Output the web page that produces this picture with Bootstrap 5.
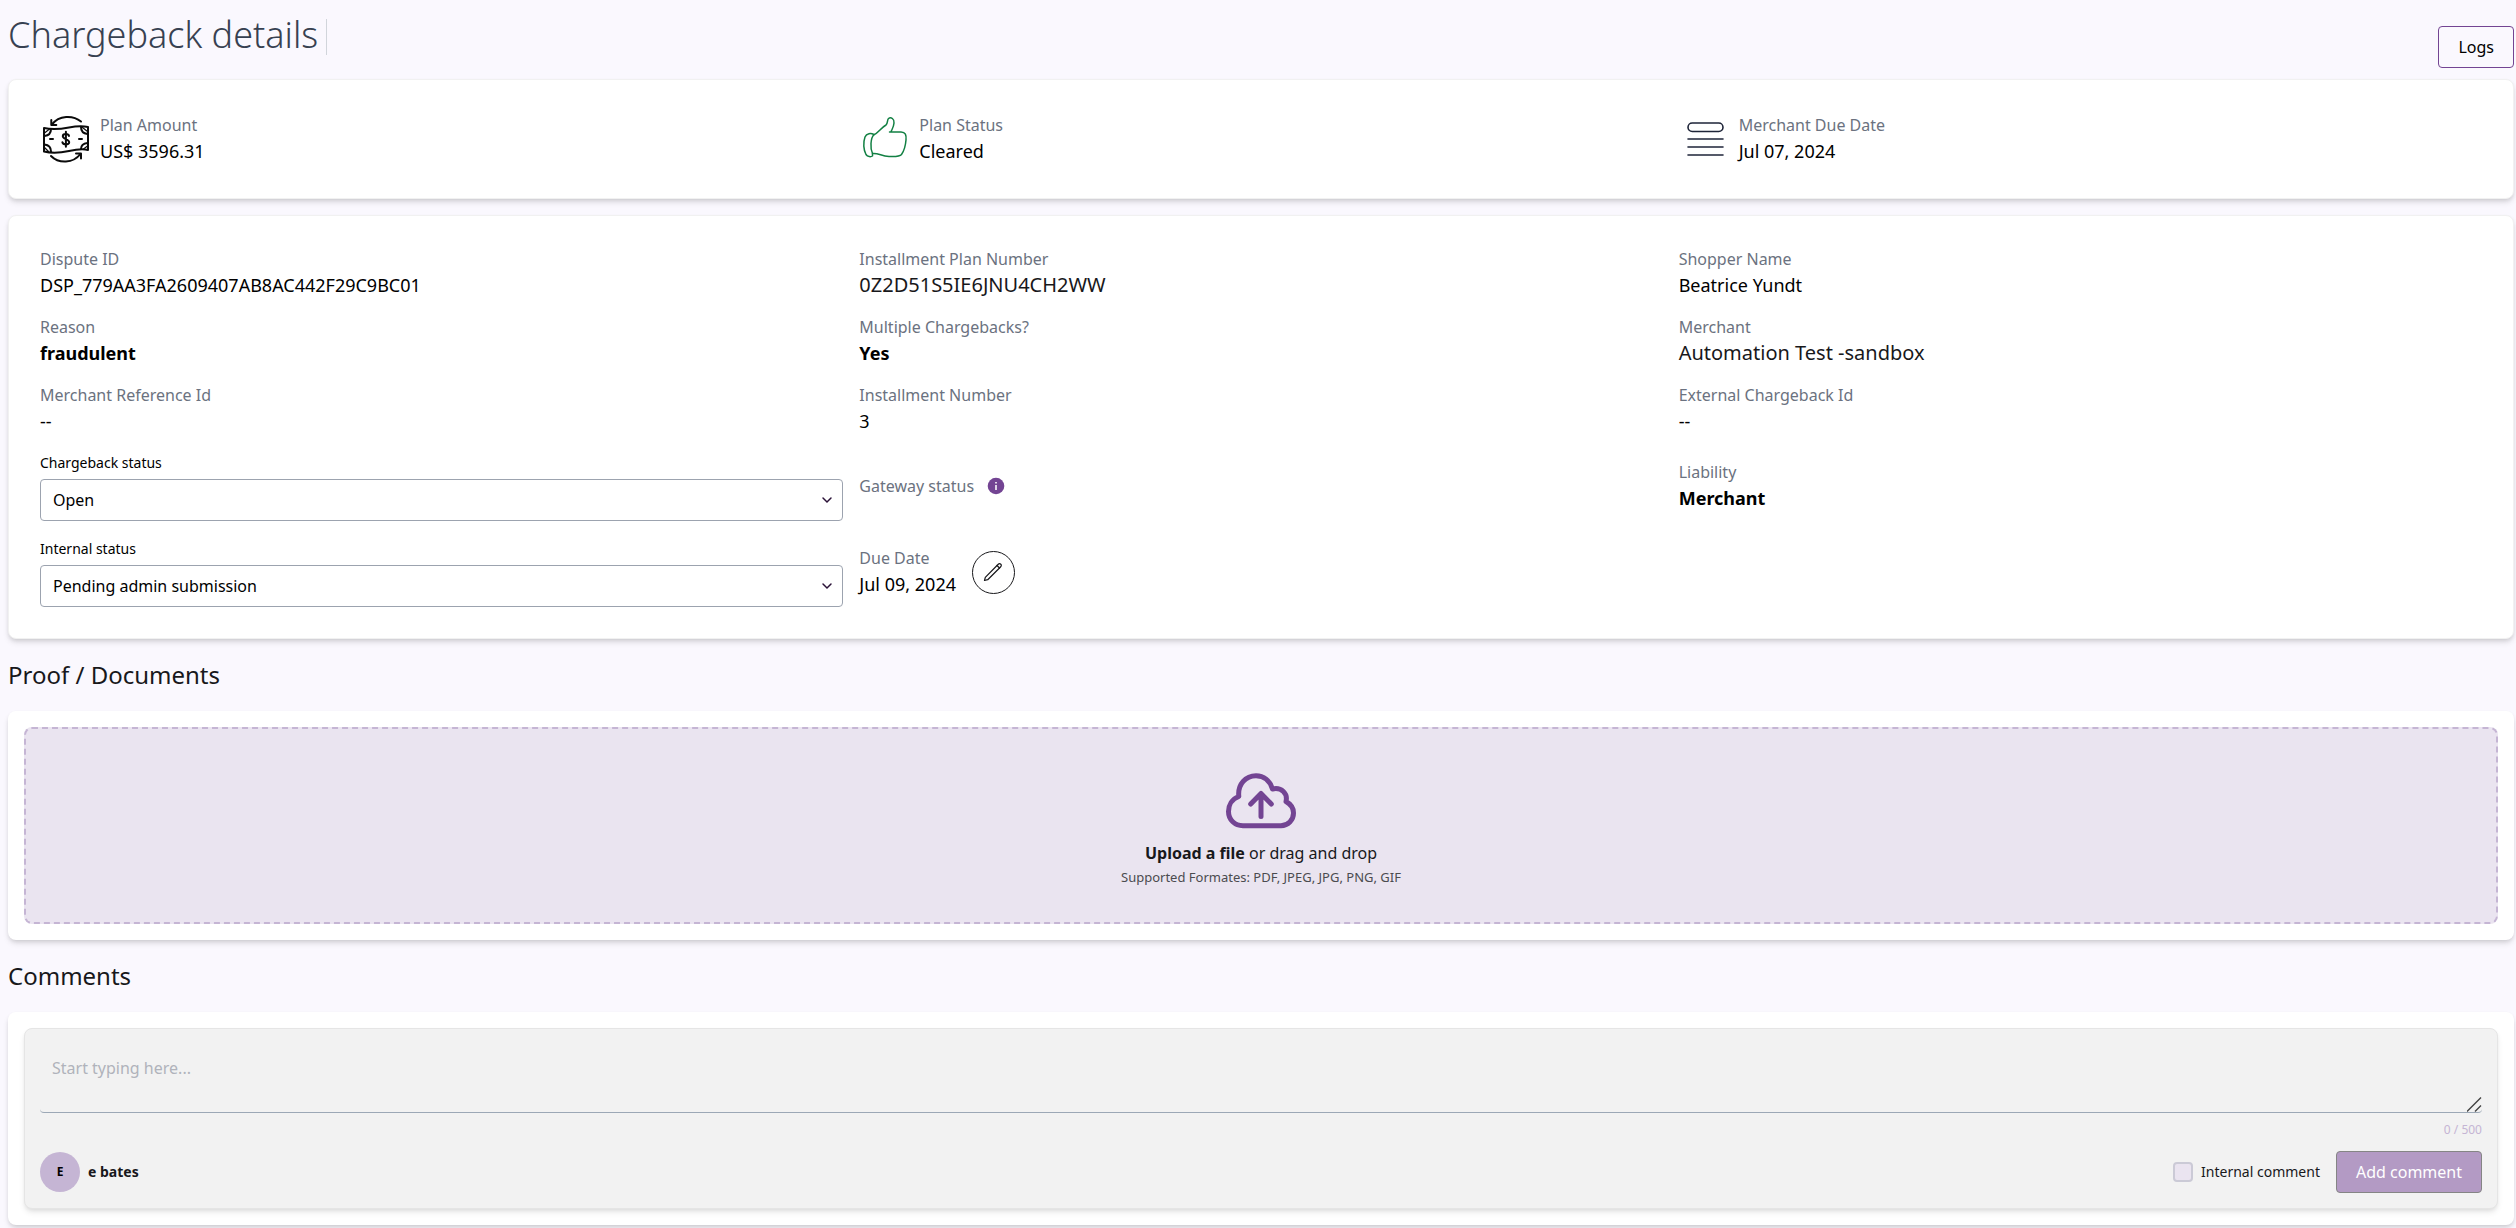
<!DOCTYPE html>
<html lang="en">
<head>
<meta charset="utf-8">
<meta name="viewport" content="width=device-width, initial-scale=1">
<title>Chargeback details</title>
<link href="https://cdn.jsdelivr.net/npm/bootstrap@5.3.0/dist/css/bootstrap.min.css" rel="stylesheet">
<style>
  :root { --purple: #734493; --purple-soft: #c5b5d4; --purple-pale: #eae4f0; --muted-ink: #6b7280; }
  body { background: #faf8fe; color: #18181b; font-family: "Noto Sans", sans-serif; font-size: 16px; line-height: 24px; }
  .page { padding: 0 2px 3px 8px; }
  .page-head { padding: 15px 0 11px; }
  .page-title { font-size: 36px; line-height: 40px; font-weight: 300; color: #374151; }
  .title-rule { width: 1px; height: 36px; background: #d1d5db; }
  .section-title { font-size: 24px; line-height: 32px; font-weight: 400; margin: 20px 0; }
  .panel { background: #fff; border-radius: 8px; box-shadow: 0 4px 6px -1px rgba(0,0,0,.12), 0 2px 4px -1px rgba(0,0,0,.1); }
  .panel-lined { border: 1px solid #f1f1f1; padding: 31px; }
  .btn-main { font-size: 16px; line-height: 24px; padding: 8px 19px; border-radius: 4px; }
  .btn-line { --bs-btn-color: #000; --bs-btn-border-color: var(--purple); --bs-btn-hover-bg: var(--purple-pale); --bs-btn-hover-border-color: var(--purple); margin-top: 11px; }
  .btn-fill, .btn-fill:disabled { background: #b39ac4; border-color: #858585; color: #fff; opacity: 1; }
  .summary-cell { min-height: 56px; }
  .summary-icon { width: 52px; height: 52px; flex: none; }
  .field-name { color: var(--muted-ink); font-weight: 400; margin: 0; }
  .field-value { color: #000; font-size: 18px; line-height: 28px; margin: 0; }
  .field-value.plain { color: #18181b; font-size: 20px; text-decoration: none; }
  .field-value.strong { font-weight: 700; }
  .status-label { font-size: 14px; line-height: 24px; color: #000; margin-bottom: 4px; }
  .status-select { height: 42px; padding: 8px 36px 8px 12px; border-color: #9ca3af; border-radius: 4px; color: #000; font-size: 16px; line-height: 24px;
    --bs-form-select-bg-img: url("data:image/svg+xml,%3Csvg xmlns='http://www.w3.org/2000/svg' viewBox='0 0 12 12'%3E%3Cpath d='M2 4l4 4 4-4' fill='none' stroke='%232b1238' stroke-width='1.5' stroke-linecap='round'/%3E%3C/svg%3E");
    background-size: 12px 12px; background-position: right 9px center; }
  .info-icon { margin-left: 11px; }
  .edit-btn { width: 43px; height: 43px; border: 1px solid #18181b; }
  .drop-zone { background: var(--purple-pale); border: 2px dashed var(--purple-soft); border-radius: 8px; padding: 44px 16px 32px; cursor: pointer; }
  .drop-hint { font-size: 13px; line-height: 25px; color: #4b4b4f; }
  .comment-box { background: #f2f2f2; border: 1px solid #e5e5e5; border-radius: 8px; padding: 15px; box-shadow: 0 4px 6px -1px rgba(0,0,0,.1), 0 2px 4px -1px rgba(0,0,0,.06); }
  .comment-input, .comment-input:focus { height: 69px; min-height: 69px; padding: 12px; background: transparent; border: 0 solid #9ca8b6; border-bottom-width: 1px; border-radius: 4px; font-size: 16px; line-height: 24px; }
  .comment-input::placeholder { color: #b0b3bb; }
  .comment-input::-webkit-resizer { background: url("data:image/svg+xml,%3Csvg xmlns='http://www.w3.org/2000/svg' viewBox='0 0 15 15'%3E%3Cpath d='M0 14.500L14 .5M8 14.500L14 8.500' fill='none' stroke='%23444' stroke-width='1.4'/%3E%3C/svg%3E") center / 100% 100% no-repeat; }
  .char-count { font-size: 12px; line-height: 18px; color: var(--purple-soft); margin: 8px 0 12px; }
  .avatar { width: 40px; height: 40px; background: var(--purple-soft); color: #000; font-size: 12px; font-weight: 700; }
  .small-text { font-size: 14px; }
  .internal-check.form-check-input { width: 20px; height: 20px; margin: 0; border: 2px solid #cbcad6; background-color: var(--purple-pale); border-radius: 4px; }
</style>
</head>
<body>
<main class="page">
  <header class="page-head d-flex justify-content-between align-items-start">
    <div class="d-flex align-items-end gap-2">
      <h1 class="page-title mb-0">Chargeback details</h1>
      <span class="title-rule"></span>
    </div>
    <button type="button" class="btn btn-main btn-line">Logs</button>
  </header>

  <section class="panel panel-lined mb-3">
    <div class="row g-3">
      <div class="col-4">
        <div class="summary-cell d-flex align-items-center gap-2">
          <svg class="summary-icon" viewBox="0 0 52 52" fill="none" stroke="#0b0b0b" stroke-width="2" stroke-linecap="round" stroke-linejoin="round" aria-hidden="true">
            <path d="M4 15C13 17 21 16 29 14.500S43 13 48 14V37C42 35.500 36 36.500 29 38S12 40.500 4 38.500Z"/>
            <path d="M11 16C11 20 8.500 22.500 4.500 23M41 14C41 18 43.500 20.500 47.500 21M4.500 31.500C8.500 32 11 34.500 11 38.500M47.500 30C43.500 30.500 41 32.500 41 36"/>
            <path d="M4.500 20L9.500 16M42.500 14.500L47.500 18.500M4.500 34.500L8.500 38.500M43.500 36L47.500 33" stroke-width="1.200"/>
            <path d="M10 26H13M39 26H42"/>
            <path d="M29 23C28.500 20.300 22.800 20.300 22.800 23.200S29.200 26.300 29.200 29.200S23 32 22.400 29.200M25.900 18.700V33.800"/>
            <path d="M41 8.500C33 2 19 2 12 11.500M11.300 7V12H16.300M11 43C19 51 33 50.500 40.500 41M36 40.500H41V45.500"/>
          </svg>
          <div><p class="field-name">Plan Amount</p><p class="field-value">US$ 3596.31</p></div>
        </div>
      </div>
      <div class="col-4">
        <div class="summary-cell d-flex align-items-center gap-2">
          <svg class="summary-icon" viewBox="0 0 52 52" fill="none" stroke="#128043" stroke-width="1.500" stroke-linecap="round" stroke-linejoin="round" aria-hidden="true">
            <path d="M14.500 22C20 19.500 21.500 15 27 12C29 10 28 7 29.500 5.500C32 3.500 35.500 6 35 10C34.500 15 33 16 32 18.800M30.500 19H42C46.500 19 47.500 22 47 27C46.500 33 45 38 42.500 41.500C40.500 44 36 43.500 30 43.500C22 43 20 40 13.500 40.500"/>
            <path d="M15 21.500C12 20 7.500 20 6 24C4 29.500 4.500 37 7 41.500C8.500 44 12 44 13.500 43V40.500M15 21.500C11.500 25 11 35.500 13.500 40.500"/>
          </svg>
          <div><p class="field-name">Plan Status</p><p class="field-value">Cleared</p></div>
        </div>
      </div>
      <div class="col-4">
        <div class="summary-cell d-flex align-items-center gap-2">
          <svg class="summary-icon" viewBox="0 0 52 52" fill="none" stroke="#1e2438" stroke-width="1.600" stroke-linecap="round" aria-hidden="true">
            <rect x="9" y="10" width="35" height="8.500" rx="4.250"/>
            <path d="M9 26H44M9 34H44M9 42H44"/>
          </svg>
          <div><p class="field-name">Merchant Due Date</p><p class="field-value">Jul 07, 2024</p></div>
        </div>
      </div>
    </div>
  </section>

  <section class="panel panel-lined">
    <div class="row g-3">
      <div class="col-4"><p class="field-name">Dispute ID</p><p class="field-value">DSP_779AA3FA2609407AB8AC442F29C9BC01</p></div>
      <div class="col-4"><p class="field-name">Installment Plan Number</p><a href="#" class="field-value plain d-block">0Z2D51S5IE6JNU4CH2WW</a></div>
      <div class="col-4"><p class="field-name">Shopper Name</p><p class="field-value">Beatrice Yundt</p></div>

      <div class="col-4"><p class="field-name">Reason</p><p class="field-value strong">fraudulent</p></div>
      <div class="col-4"><p class="field-name">Multiple Chargebacks?</p><p class="field-value strong">Yes</p></div>
      <div class="col-4"><p class="field-name">Merchant</p><a href="#" class="field-value plain d-block">Automation Test -sandbox</a></div>

      <div class="col-4"><p class="field-name">Merchant Reference Id</p><p class="field-value">--</p></div>
      <div class="col-4"><p class="field-name">Installment Number</p><p class="field-value">3</p></div>
      <div class="col-4"><p class="field-name">External Chargeback Id</p><p class="field-value">--</p></div>

      <div class="col-4">
        <label class="status-label d-block" for="chargeback-status">Chargeback status</label>
        <select class="form-select status-select" id="chargeback-status"><option>Open</option></select>
      </div>
      <div class="col-4 d-flex align-items-center">
        <p class="field-name">Gateway status</p>
        <svg class="info-icon" width="22" height="22" viewBox="0 0 22 22" aria-label="Gateway status info" role="img">
          <circle cx="11" cy="11" r="8.300" fill="#734493"/>
          <path d="M11 10V15M11 7V8.500" stroke="#eae4f0" stroke-width="1.800"/>
        </svg>
      </div>
      <div class="col-4 d-flex align-items-center">
        <div><p class="field-name">Liability</p><p class="field-value strong">Merchant</p></div>
      </div>

      <div class="col-4">
        <label class="status-label d-block" for="internal-status">Internal status</label>
        <select class="form-select status-select" id="internal-status"><option>Pending admin submission</option></select>
      </div>
      <div class="col-4 d-flex align-items-center gap-3">
        <div><p class="field-name">Due Date</p><p class="field-value">Jul 09, 2024</p></div>
        <button type="button" class="btn edit-btn rounded-circle p-0 d-flex align-items-center justify-content-center" aria-label="Edit due date">
          <svg width="20" height="20" viewBox="0 0 20 20" fill="none" stroke="#18181b" stroke-width="1.200" stroke-linejoin="round" stroke-linecap="round">
            <path d="M1.500 18.500L2.300 15.300L15 2.500C15.900 1.600 17 1.500 17.800 2.200S18.400 4.100 17.500 5L4.700 17.700Z"/>
            <path d="M14 3.500L16.500 6"/>
          </svg>
        </button>
      </div>
    </div>
  </section>

  <h2 class="section-title">Proof / Documents</h2>
  <section class="panel p-3">
    <label class="drop-zone d-flex flex-column align-items-center text-center" for="proof-file">
      <svg width="70" height="56" viewBox="0 0 70 56" fill="none" stroke="#734493" stroke-width="5" stroke-linecap="round" stroke-linejoin="round" aria-hidden="true">
        <path d="M17 52.700H55C62 52.700 67.500 47 67.500 40C67.500 35 64.500 31 60 28.500C62 20.500 55.500 14 46.500 16C44 7.500 37.500 2.700 30 2.700C20 2.700 11.500 11 12.800 23.500C6 26 2.500 32 2.500 38.500C2.500 47 9 52.700 17 52.700Z"/>
        <path d="M35 43.500V20.500M24.700 31L35 20.500L45.300 31"/>
      </svg>
      <span class="mt-2 pt-1"><strong>Upload a file</strong> or drag and drop</span>
      <span class="drop-hint">Supported Formates: PDF, JPEG, JPG, PNG, GIF</span>
      <input type="file" class="visually-hidden" id="proof-file" accept=".pdf,.jpeg,.jpg,.png,.gif">
    </label>
  </section>

  <h2 class="section-title">Comments</h2>
  <section class="panel p-3">
    <form class="comment-box">
      <textarea class="form-control comment-input" placeholder="Start typing here..." aria-label="Comment" maxlength="500"></textarea>
      <p class="char-count text-end">0 / 500</p>
      <div class="d-flex justify-content-between align-items-center">
        <div class="d-flex align-items-center gap-2">
          <span class="avatar rounded-circle d-flex align-items-center justify-content-center">E</span>
          <strong class="small-text">e bates</strong>
        </div>
        <div class="d-flex align-items-center gap-3">
          <div class="d-flex align-items-center gap-2">
            <input class="form-check-input internal-check" type="checkbox" id="internal-comment">
            <label class="small-text" for="internal-comment">Internal comment</label>
          </div>
          <button type="button" class="btn btn-main btn-fill" disabled>Add comment</button>
        </div>
      </div>
    </form>
  </section>
</main>
<script src="https://cdn.jsdelivr.net/npm/bootstrap@5.3.0/dist/js/bootstrap.bundle.min.js"></script>
</body>
</html>
